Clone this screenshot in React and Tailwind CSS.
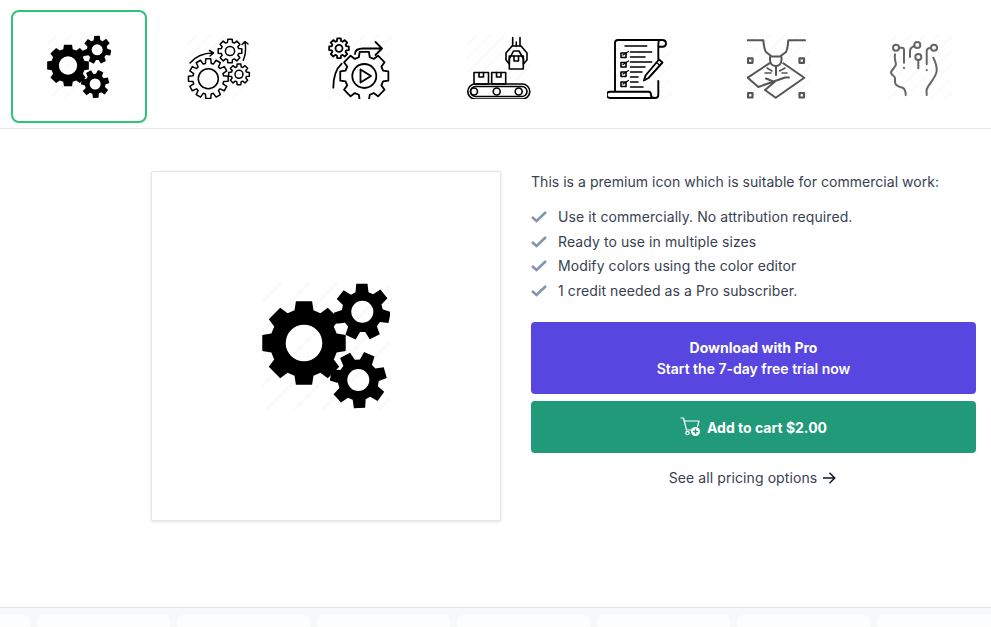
import React from "react";

function gearPath(cx, cy, outer, root, teeth, rot = 0, tipFrac = 0.28, baseFrac = 0.36) {
  const step = (Math.PI * 2) / teeth;
  const pts = [];
  for (let i = 0; i < teeth; i++) {
    const a = rot * (Math.PI / 180) + i * step;
    const p = (r, d) => [cx + r * Math.cos(a + d * step), cy + r * Math.sin(a + d * step)];
    pts.push(p(root, -baseFrac), p(outer, -tipFrac * (root / outer) - 0.02), p(outer, tipFrac * (root / outer) + 0.02), p(root, baseFrac));
  }
  return "M" + pts.map((q) => q[0].toFixed(2) + " " + q[1].toFixed(2)).join("L") + "Z";
}

function circlePath(cx, cy, r) {
  return `M${cx - r} ${cy}a${r} ${r} 0 1 0 ${2 * r} 0a${r} ${r} 0 1 0 ${-2 * r} 0Z`;
}

function Hatch({ s = 64 }) {
  const k = s / 64;
  const offs = [10, 24, 38, 52, 66, 80, 94, 108, 122];
  return (
    <g stroke="#fbfbfb" strokeWidth={2 * k} fill="none">
      <path d={offs.map((o) => {
        const x0 = o <= 64 ? 0 : o - 64;
        const x1 = o <= 64 ? o : 64;
        return `M${x0 * k} ${(o - x0) * k}L${x1 * k} ${(o - x1) * k}`;
      }).join("")} />
    </g>
  );
}

function SolidGears({ size }) {
  return (
    <svg width={size} height={size} viewBox="0 0 128 128">
      <Hatch s={128} />
      <path fillRule="evenodd" fill="#000" d={gearPath(42, 61, 42.500, 34, 8, 0) + circlePath(42, 61, 18.3)} />
      <path fillRule="evenodd" fill="#000" d={gearPath(100.3, 29.7, 28.5, 20.5, 7, 12) + circlePath(100.3, 29.7, 11)} />
      <path fillRule="evenodd" fill="#000" d={gearPath(96.3, 98, 28.5, 20.5, 7, 36) + circlePath(96.3, 98, 11)} />
    </svg>
  );
}

function Line({ children, color = "#000", w = 1.7 }) {
  return (
    <svg width="64" height="64" viewBox="0 0 64 64" fill="none" stroke={color} strokeWidth={w} strokeLinecap="round" strokeLinejoin="round">
      <Hatch />
      {children}
    </svg>
  );
}

const IconA = () => (
  <Line w={1.5}>
    <path d={gearPath(21.3, 43.7, 20, 15.5, 12, 0)} />
    <circle cx="21.3" cy="43.7" r="10" />
    <path d={gearPath(43, 16, 12, 9, 8, 0)} />
    <circle cx="43" cy="16" r="4.6" />
    <path d={gearPath(52, 39.3, 10.5, 7.8, 8, 0)} />
    <circle cx="52" cy="39.3" r="4" />
    <path d="M3 28C9 21 17 18 26 18M22.5 15.5L26.5 18L23 21" />
    <path d="M56.3 25.3C59 19 59 13 58 7M55 9.5L58 6.5L61 9" />
  </Line>
);

const IconB = () => (
  <Line w={1.8}>
    <path d={gearPath(37.3, 41, 24.5, 19.5, 8, 0)} />
    <circle cx="37.3" cy="41" r="12" />
    <path d="M33.5 34.5L44 41L33.5 47.5Z" />
    <path d={gearPath(12, 13.3, 10, 7.5, 8, 0)} />
    <circle cx="12" cy="13.3" r="3.5" />
    <path d="M28 19C28 15 31 13.5 36 13.5L54 13.5M48.5 7L55 13.5L48.5 20" />
    <path d="M14.7 28.7C9 34 6.3 42 6.3 52.7" />
  </Line>
);

const IconC = () => (
  <Line w={1.6}>
    <rect x="0.8" y="49" width="62" height="15" rx="7.5" />
    <rect x="3.5" y="51.5" width="56.5" height="10" rx="5" />
    <circle cx="7" cy="56.5" r="3.5" />
    <circle cx="29.7" cy="56.5" r="3.5" />
    <circle cx="51.7" cy="56.5" r="3.5" />
    <rect x="7" y="37.5" width="14.5" height="11.5" />
    <path d="M12 37.5V42H16.500V37.500" />
    <rect x="24.7" y="37.5" width="14" height="11.5" />
    <path d="M29.500 37.500V42H34V37.500" />
    <rect x="42.3" y="21" width="14" height="13" />
    <path d="M47 21V26H51.500V21" />
    <path d="M45.700 2.500V11M53 2.500V11M49.300 7V11" />
    <path d="M45 11H54L60 18V25L56.500 29V24L52 16H46.500L42.300 24V29L39 25V18Z" />
  </Line>
);

const IconD = () => (
  <Line w={1.9}>
    <path d="M8 56.700V8C8 6 9.500 5 11 5H55C57.500 5 59 6.500 59 8.500C59 10.500 57.500 11.700 55.500 11.700H52.500M52 5.500C51.300 7 51.300 10 51.300 12V24M51.300 46V60C51.300 62 49.500 63 48 63H3C1 63 -0.300 61.500 -0.300 60C-0.300 58 1 56.700 3 56.700H41.500C43 56.700 44 58 44 60C44 61.500 45 63 47.500 63" />
    <path d="M18 11H39.700" strokeWidth="1.4" />
    <path d="M14 18H19V22.500H14ZM14 27.500H19V32H14ZM14 37H19V41.500H14ZM14 47H19V51.500H14Z" strokeWidth="1.600" />
    <path d="M16 20L21.500 16.500M16 29.500L21.500 26M16 39L21.500 35.500M16 49L21.500 45.500" strokeWidth="1.200" />
    <path d="M23.500 17H44.700M23.500 22H38M23.500 27H44.700M23.500 32H38M23.500 37H35M23.500 42H31M23.500 47H31M23.500 52H36" strokeWidth="1.500" />
    <path d="M52 24.500L55.500 27.500L41.500 43L37 45.500L38.500 40.500Z" />
    <path d="M49.500 27.500L53 30.500" strokeWidth="1.200" />
  </Line>
);

const IconE = () => (
  <Line color="#555" w={2}>
    <path d="M-0.300 5.300H16.300C17 11 17 14 19 17L24.700 21.500H33L39 17C41 14 40.500 11 41.300 5.300H58" />
    <path d="M23 22V25C23 28.500 25.500 31 29 31C32 31 34.500 28.500 34.500 25V22" />
    <path d="M29 31V40" />
    <path d="M20 33L25 36M38 33L32.500 36M18 38H24M40 38H35" strokeWidth="1.500" />
    <path d="M22.300 28.300L0.700 42.700L11.300 52L38 42.500H42M36.300 28.300L57.300 42.700L28.700 62.700L18 55L27.500 47L19 43.500" />
    <rect x="1" y="23.300" width="4.500" height="4.500" strokeWidth="2.200" />
    <rect x="52.500" y="23.300" width="4.500" height="4.500" strokeWidth="2.200" />
    <rect x="1" y="58" width="4.500" height="4.500" strokeWidth="2.200" />
    <rect x="52.500" y="58" width="4.500" height="4.500" strokeWidth="2.200" />
  </Line>
);

const IconF = () => (
  <Line color="#666" w={2}>
    <circle cx="9" cy="12.700" r="3" />
    <circle cx="30.300" cy="10" r="3" />
    <circle cx="47" cy="12.700" r="3" />
    <circle cx="31.300" cy="22" r="3" />
    <path d="M12 12.700H15C16.500 12.700 17 14 17 15V27.700M17 32.700V33" />
    <path d="M23 22V16C23 14 25 12 27.300 11" />
    <path d="M31.300 25.300V33.300" />
    <path d="M44 12.700C41 13 39.700 14 39.700 16V29.300M39.700 35V35.300" />
    <path d="M8 19.300C7 23 8.500 26 9 29.300C9 32 4 35 4 37.700C4 40 8 41 8 43V47C8 51 13 52 15 52.500C18 53.500 18.700 56 18.700 60" />
    <path d="M46.300 22.700C49 28 50 32 49.700 36C49 43 42 48 39.700 54.300C39.300 56 39.700 58 39.700 60" />
  </Line>
);

const thumbs = [<SolidGears size={64} key="a" />, <IconA key="b" />, <IconB key="c" />, <IconC key="d" />, <IconD key="e" />, <IconE key="f" />, <IconF key="g" />];

const features = [
  "Use it commercially. No attribution required.",
  "Ready to use in multiple sizes",
  "Modify colors using the color editor",
  "1 credit needed as a Pro subscriber.",
];

const Check = () => (
  <svg width="16" height="13" viewBox="0 0 16 13" fill="none" stroke="#8296ad" strokeWidth="2.600" className="shrink-0">
    <path d="M1 7L5.500 11L15 2" />
  </svg>
);

const Cart = () => (
  <svg width="21" height="20" viewBox="0 0 21 20" fill="none" stroke="#fff" strokeWidth="1.200" strokeLinecap="round" strokeLinejoin="round" className="shrink-0">
    <path d="M1 1H3.500L6.500 13H12" />
    <path d="M4.200 4H19L17.500 9.500" />
    <circle cx="7.500" cy="16" r="1.700" />
    <circle cx="15.500" cy="14.500" r="4.500" fill="#fff" stroke="none" />
    <path d="M15.500 12.500V16.500M13.500 14.500H17.500" stroke="#209a78" strokeWidth="1.300" />
  </svg>
);

const Arrow = () => (
  <svg width="14" height="14" viewBox="0 0 14 14" fill="none" stroke="#111827" strokeWidth="1.500" className="shrink-0">
    <path d="M1 7H12.500M7.500 1.800L12.700 7L7.500 12.200" />
  </svg>
);

export default function App() {
  return (
    <div className="h-[627px] overflow-hidden bg-white flex flex-col text-[#374151] text-[14px]" style={{ fontFamily: '"Inter", "Liberation Sans", sans-serif' }}>
      <div className="h-[129px] shrink-0 border-b border-[#e2e8f0] pt-[10px] pl-[11px] flex items-start">
        {thumbs.map((t, i) => (
          <div key={i} className={`w-[136px] h-[113px] mr-[4px] shrink-0 rounded-[8px] flex items-center justify-center border-2 ${i === 0 ? "border-[#2ec27a]" : "border-transparent"}`}>
            {t}
          </div>
        ))}
      </div>

      <div className="h-[478px] shrink-0 flex items-start pt-[42px] pl-[151px]">
        <div className="w-[350px] h-[350px] shrink-0 bg-white border border-[#e5e7eb] rounded-[2px] shadow-[0_1px_3px_rgba(0,0,0,0.12)] flex items-center justify-center">
          <SolidGears size={128} />
        </div>
        <div className="w-[445px] ml-[30px] shrink-0">
          <p className="leading-[20px] mt-[1px] tracking-[0.033px]">This is a premium icon which is suitable for commercial work:</p>
          <ul className="mt-[12.600px] flex flex-col tracking-[0.09px]">
            {features.map((f) => (
              <li key={f} className="flex items-center h-[24.500px] gap-[11px]">
                <Check />
                <span>{f}</span>
              </li>
            ))}
          </ul>
          <div className="mt-[19.400px] h-[72px] rounded-[4px] bg-[#5846e0] text-white font-semibold flex flex-col items-center justify-center leading-[21px]">
            <span className="font-bold">Download with Pro</span>
            <span>Start the 7-day free trial now</span>
          </div>
          <div className="mt-[7px] h-[52px] pt-[1px] rounded-[4px] bg-[#209a78] text-white font-semibold text-[14px] flex items-center justify-center gap-[6px]">
            <Cart />
            <span className="font-bold">Add to cart $2.00</span>
          </div>
          <div className="mt-[15px] pr-[2px] flex items-center justify-center gap-[5px] leading-[20px] tracking-[0.09px]">
            <span>See all pricing options</span>
            <Arrow />
          </div>
        </div>
      </div>

      <div className="flex-1 border-t border-[#dfe3ea] bg-[#f7f8fa] pt-[7px] overflow-hidden">
        <div className="flex gap-[7px] -ml-[103px] h-full">
          {Array.from({ length: 9 }).map((_, i) => (
            <div key={i} className="w-[133px] shrink-0 h-[40px] bg-[#fdfdfd] rounded-[6px]" />
          ))}
        </div>
      </div>
    </div>
  );
}
